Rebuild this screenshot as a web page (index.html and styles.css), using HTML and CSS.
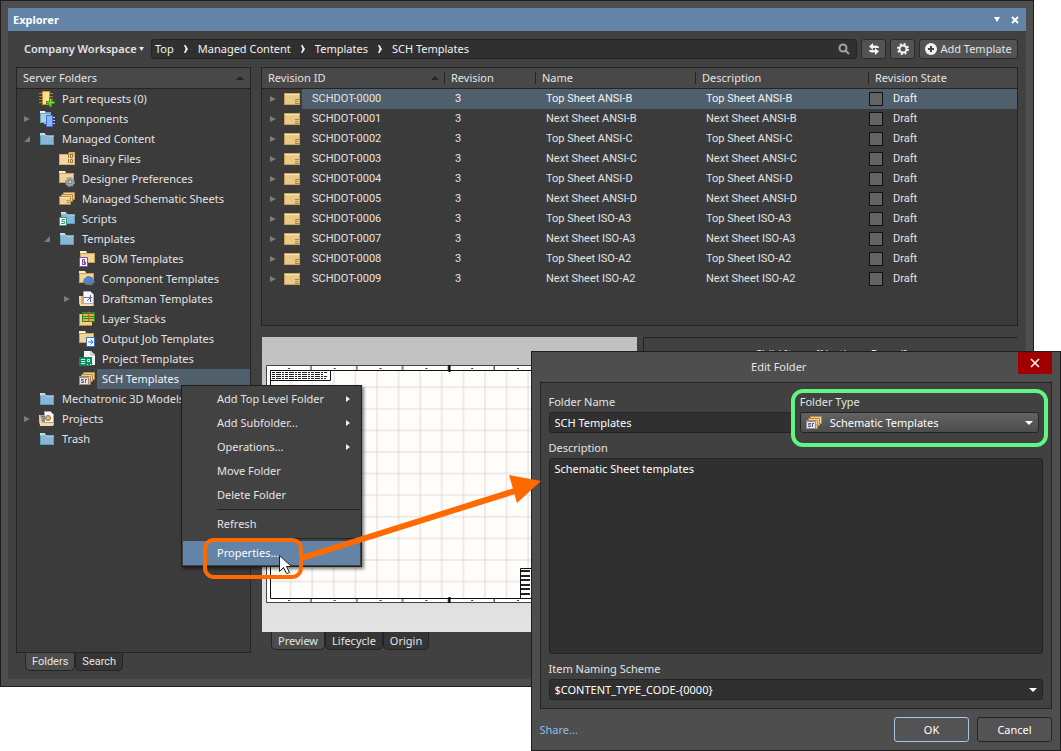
FILE: index.html
```html
<!DOCTYPE html>
<html lang="en">
  <head>
    <meta charset="UTF-8" />
    <meta name="viewport" content="width=device-width, initial-scale=1.0" />
    <title>Explorer</title>
    <link rel="stylesheet" href="styles.css">
  </head>
  <body>
    <!-- icon set -->
    <svg class="sprite" width="0" height="0" aria-hidden="true">
      <symbol id="i-folder" viewBox="0 0 16 16">
        <path d="M1 3h5l1 1.500h8V14H1z" fill="#5c9fbd"/>
        <path d="M1 2h5v2H1z" fill="#bfe3ee"/>
        <path d="M2 5h12v8H2z" fill="#8bb4d6"/>
        <path d="M1 4h6l1 1h7" fill="none" stroke="#b9dcea"/>
      </symbol>
      <symbol id="i-tan" viewBox="0 0 16 16">
        <path d="M0 2h6l1 2h8v10H0z" fill="#c9a25c"/>
        <path d="M1 5h13v8H1z" fill="#f0d49a"/>
        <path d="M0 2h6l1 2H0z" fill="#fdf0c8"/>
      </symbol>
      <symbol id="i-part" viewBox="0 0 16 16">
        <path d="M0 2.500h14M0 5.500h14M0 8.500h14M0 11.500h14" stroke="#a9843c"/>
        <path d="M3 0h8v14H3z" fill="#c98f2b"/>
        <path d="M4 1h6v12H4z" fill="#ffe092"/>
        <path d="M11.500 7v9M7 11.500h9" stroke="#1c5a10" stroke-width="3"/>
        <path d="M11.500 7.500v8M7.500 11.500h8" stroke="#6fdc32" stroke-width="2"/>
      </symbol>
      <symbol id="i-comp" viewBox="0 0 16 16">
        <path d="M1 0h5l1 1h5v11H1z" fill="#6fa9bd"/>
        <path d="M2 3h9v8H2z" fill="#a9d2dd"/>
        <path d="M1 0h5v2H1z" fill="#e0f6fa"/>
        <path d="M5 6.500h11M5 9.500h11M5 12.500h11" stroke="#b9cdf2"/>
        <path d="M7 4h7v12H7z" fill="#4674d6"/>
        <path d="M8 5h5v10H8z" fill="#8fb3f6"/>
      </symbol>
      <symbol id="i-binary" viewBox="0 0 16 16">
        <path d="M0 3h9l1-2h6v13H0z" fill="#d8ae68"/>
        <path d="M1 4h14v9H1z" fill="#f3d7a2"/>
        <path d="M9.500 3v4M9.500 8v4M11.500 3.500h2v3h-2zM11.500 8.500h2v3h-2z" fill="none" stroke="#94763d"/>
      </symbol>
      <symbol id="i-prefs" viewBox="0 0 16 16">
        <use href="#i-tan" y="-2"/>
        <circle cx="11" cy="11" r="4" fill="#aab0b5" stroke="#8d959b" stroke-width="2" stroke-dasharray="2 1"/>
        <circle cx="11" cy="11" r="2" fill="#c9ced2" stroke="#697177"/>
      </symbol>
      <symbol id="i-sheets" viewBox="0 0 16 16">
        <g fill="#f0d197" stroke="#b38b45">
          <path d="M4.500 1.500h11v7h-11z"/><path d="M2.500 3.500h11v7h-11z"/><path d="M.5 5.500h11v8H.5z"/>
        </g>
        <path d="M1 6.500h10" stroke="#fdebc0"/>
        <path d="M7.500 9.500h3M7.500 11.500h3" stroke="#b38b45"/>
      </symbol>
      <symbol id="i-script" viewBox="0 0 16 16">
        <use href="#i-folder" x="1" y="-1"/>
        <path d="M.5 6.500h7v8h-7z" fill="#fff" stroke="#2e9c78"/>
        <path d="M6 8.500H3v2h2.500v2H2" fill="none" stroke="#2e9c78"/>
      </symbol>
      <symbol id="i-bom" viewBox="0 0 16 16">
        <use href="#i-tan" x="1" y="-2"/>
        <path d="M.5 6.500h8v9h-8z" fill="#fff" stroke="#8546b5"/>
        <path d="M3.500 8.500h2v5h-2zM3.500 11h3v2.500h-3z" fill="none" stroke="#8546b5"/>
      </symbol>
      <symbol id="i-comptpl" viewBox="0 0 16 16">
        <use href="#i-tan" y="-2"/>
        <path d="M4 11l2-4 3-2 4 1 3 5-3 3H7z" fill="#6c7787"/>
        <path d="M4 9l5-4 6 4-5 3z" fill="#4a84dc"/>
      </symbol>
      <symbol id="i-drafts" viewBox="0 0 16 16">
        <path d="M0 5h13l2 10H2L0 13z" fill="#d9b06a"/>
        <path d="M4.500.5h7l3 3v9h-10z" fill="#f8f9ff" stroke="#a5abc4"/>
        <path d="M0 5h2v8h13l-2 2H1z" fill="#f7dfa9"/>
        <path d="M5 6.500h8M11.500 4v7M12 6l-4 4" fill="none" stroke="#5a67b5"/>
        <path d="M6 6.500h3" stroke="#d0506a"/>
      </symbol>
      <symbol id="i-layers" viewBox="0 0 16 16">
        <path d="M0 3h13v12H0z" fill="#f0d08e"/>
        <path d="M.5 3v11.500H13" fill="none" stroke="#b58a3f"/>
        <path d="M3 1h13v10H3z" fill="#35862b"/>
        <path d="M4 3h11v2H4zM4 8h11v2H4z" fill="#f3a742"/>
        <path d="M4 6.500h11" stroke="#9edb55"/>
        <path d="M9.500 1v10" stroke="#a8682c"/>
      </symbol>
      <symbol id="i-output" viewBox="0 0 16 16">
        <use href="#i-tan" y="-2"/>
        <path d="M7.500 6.500h8v9h-8z" fill="#fff" stroke="#2f6fd0"/>
        <path d="M9 11h5M11.500 8.500L14 11l-2.500 2.500" fill="none" stroke="#2f6fd0"/>
      </symbol>
      <symbol id="i-project" viewBox="0 0 16 16">
        <path d="M5 0h7l4 4v10H5z" fill="#f2f7f5"/>
        <path d="M12 0v4h4" fill="none" stroke="#9fb8ad"/>
        <path d="M0 6h13v9H0z" fill="#0d8c66"/>
        <path d="M2 8.500h4M2 10.500h4M2 12.500h4M8.500 8.500h2v2h-2zM8 13.500h1M11 13.500h1" fill="none" stroke="#d7f6e9"/>
      </symbol>
      <symbol id="i-sch" viewBox="0 0 16 16">
        <use href="#i-sheets"/>
        <path d="M.5 6.500h9v7h-9z" fill="#f2e6d8" stroke="#9a8b86"/>
        <path d="M5 8.500H2.500v1.500h2v1.500H2M6 8.500h2M6.500 9v3" fill="none" stroke="#4a5fc8"/>
      </symbol>
      <symbol id="i-projects" viewBox="0 0 16 16">
        <path d="M0 4h13l2 10H2L0 12z" fill="#c99f57"/>
        <path d="M5.500.5h6l3 3v8h-9z" fill="#f4f5fa" stroke="#9ba1b5"/>
        <circle cx="9" cy="7" r="2.500" fill="#e7b850" stroke="#8c7440"/>
        <path d="M2 5.500h4M3 7.500h3M2 9.500h4" stroke="#4d7fc4"/>
        <path d="M0 4h1l2 8h12l-1 3H1z" fill="#f5dba3"/>
      </symbol>
      <symbol id="i-item" viewBox="0 0 16 12">
        <path d="M0 0h16v12H0z" fill="#c9a35a"/>
        <path d="M1 1h14v10H1z" fill="#e9c888"/>
        <path d="M1 1.500h14" stroke="#fbe7b6"/>
        <path d="M11 6.500h4M11 8.500h3M11 10.500h4" stroke="#a98440"/>
      </symbol>
      <symbol id="i-chevron" viewBox="0 0 6 8"><path d="M1 0h1.500L5 4 2.500 8H1l1.500-4z" fill="#eee"/></symbol>
    </svg>

    <div class="desktop">
      <main class="explorer">
        <header class="titlebar">
          <h1>Explorer</h1>
          <button aria-label="Panel menu"><svg width="8" height="6"><path d="M1 0h6L4 5z" fill="#fff"/></svg></button>
          <button aria-label="Close panel"><svg width="8" height="8"><path d="M1 1l6 6M7 1L1 7" stroke="#fff" stroke-width="2"/></svg></button>
        </header>

        <div class="workspace">
          <div class="toolbar">
            <button class="company">Company Workspace <svg width="5" height="4"><path d="M0 0h5L2.500 4z" fill="#e8e8e8"/></svg></button>
            <nav class="crumbs">
              <a href="#">Top</a><svg width="6" height="8"><use href="#i-chevron"/></svg>
              <a href="#">Managed Content</a><svg width="6" height="8"><use href="#i-chevron"/></svg>
              <a href="#">Templates</a><svg width="6" height="8"><use href="#i-chevron"/></svg>
              <a href="#">SCH Templates</a>
              <button class="search" aria-label="Search"><svg width="12" height="12"><circle cx="5" cy="5" r="3.500" fill="none" stroke="#a5a5a5" stroke-width="2"/><path d="M7.500 7.500L11 11" stroke="#a5a5a5" stroke-width="2"/></svg></button>
            </nav>
            <button class="tool" aria-label="Refresh"><svg width="12" height="12"><path d="M1 3.500L5 0v2.500h3c2 0 3 1 3 2.500H5v2zM11 8.500L7 12V9.500H4C2 9.500 1 8.500 1 7h6V5z" fill="#f2f2f2"/></svg></button>
            <button class="tool" aria-label="Settings"><svg width="12" height="12"><circle cx="6" cy="6" r="5" fill="none" stroke="#f2f2f2" stroke-width="2" stroke-dasharray="2 1.930"/><circle cx="6" cy="6" r="3.500" fill="none" stroke="#f2f2f2" stroke-width="2"/></svg></button>
            <button class="tool add"><svg width="12" height="12"><circle cx="6" cy="6" r="6" fill="#f2f2f2"/><path d="M6 3v6M3 6h6" stroke="#444" stroke-width="2"/></svg>Add Template</button>
          </div>

          <div class="columns">
            <section class="side">
              <div class="panel tree-panel">
                <h2 class="panel-head">Server Folders <svg width="8" height="4"><path d="M0 4h8L4 0z" fill="#252525"/></svg></h2>
                <ul class="tree">
                  <li><div class="node"><i></i><svg><use href="#i-part"/></svg><span>Part requests (0)</span></div></li>
                  <li><div class="node"><i class="closed"></i><svg><use href="#i-comp"/></svg><span>Components</span></div></li>
                  <li>
                    <div class="node"><i class="open"></i><svg><use href="#i-folder"/></svg><span>Managed Content</span></div>
                    <ul>
                      <li><div class="node"><i></i><svg><use href="#i-binary"/></svg><span>Binary Files</span></div></li>
                      <li><div class="node"><i></i><svg><use href="#i-prefs"/></svg><span>Designer Preferences</span></div></li>
                      <li><div class="node"><i></i><svg><use href="#i-sheets"/></svg><span>Managed Schematic Sheets</span></div></li>
                      <li><div class="node"><i></i><svg><use href="#i-script"/></svg><span>Scripts</span></div></li>
                      <li>
                        <div class="node"><i class="open"></i><svg><use href="#i-folder"/></svg><span>Templates</span></div>
                        <ul>
                          <li><div class="node"><i></i><svg><use href="#i-bom"/></svg><span>BOM Templates</span></div></li>
                          <li><div class="node"><i></i><svg><use href="#i-comptpl"/></svg><span>Component Templates</span></div></li>
                          <li><div class="node"><i class="closed"></i><svg><use href="#i-drafts"/></svg><span>Draftsman Templates</span></div></li>
                          <li><div class="node"><i></i><svg><use href="#i-layers"/></svg><span>Layer Stacks</span></div></li>
                          <li><div class="node"><i></i><svg><use href="#i-output"/></svg><span>Output Job Templates</span></div></li>
                          <li><div class="node"><i></i><svg><use href="#i-project"/></svg><span>Project Templates</span></div></li>
                          <li><div class="node selected"><i></i><svg><use href="#i-sch"/></svg><span>SCH Templates</span></div></li>
                        </ul>
                      </li>
                    </ul>
                  </li>
                  <li><div class="node"><i></i><svg><use href="#i-folder"/></svg><span>Mechatronic 3D Models</span></div></li>
                  <li><div class="node"><i class="closed"></i><svg><use href="#i-projects"/></svg><span>Projects</span></div></li>
                  <li><div class="node"><i></i><svg><use href="#i-folder"/></svg><span>Trash</span></div></li>
                </ul>
              </div>
              <div class="tabs">
                <button class="active">Folders</button><button>Search</button>
              </div>
            </section>

            <section class="content">
              <div class="panel items">
                <table>
                  <colgroup><col class="c-id"><col class="c-rev"><col class="c-name"><col class="c-desc"><col></colgroup>
                  <thead>
                    <tr>
                      <th>Revision ID <svg width="8" height="4"><path d="M0 4h8L4 0z" fill="#252525"/></svg></th>
                      <th>Revision</th><th>Name</th><th>Description</th><th>Revision State</th>
                    </tr>
                  </thead>
                  <tbody id="rows"></tbody>
                </table>
              </div>
              <div class="details">
                <div class="preview">
                  <svg viewBox="0 0 375 295" preserveAspectRatio="xMinYMin slice" role="img" aria-label="Sheet preview">
                    <defs>
                      <pattern id="grid" x="3" y="6" width="21.600" height="21.600" patternUnits="userSpaceOnUse">
                        <path d="M4 0v22M0 1h22" stroke="#ddd9d5" fill="none"/>
                      </pattern>
                      <pattern id="ticks" x="4" y="0" width="45.800" height="300" patternUnits="userSpaceOnUse">
                        <path d="M45 0v300" stroke="#111"/><path d="M22 31.500h2M22 263.500h2" stroke="#333"/>
                      </pattern>
                    </defs>
                    <path d="M4.500 28.500h366v237h-366z" fill="#fff" stroke="#444"/>
                    <path d="M5 29h365v236H5z" fill="url(#ticks)"/>
                    <path d="M8.500 33.500h358v228h-358z" fill="#fffdfa"/>
                    <path d="M8.500 33.500h358v228h-358z" fill="url(#grid)" stroke="#111"/>
                    <path d="M187.500 28v7M187.500 260v6" stroke="#000" stroke-width="2"/>
                    <path d="M8.500 33.500h60v10h-60z" fill="#fff" stroke="#111"/>
                    <path d="M10 35.500h56M10 37.500h52M10 39.500h55M10 41.500h54" stroke="#222" stroke-dasharray="3 1 5 1 2 1"/>
                    <path d="M258.500 231.500h108v30h-108z" fill="#fff" stroke="#111"/>
                    <path d="M259 234h107M259 239h107M259 243h107M259 248h107M259 252h107M259 257h107" stroke="#222" stroke-width="2" stroke-dasharray="9 1 4 1"/>
                  </svg>
                </div>
                <div class="panel children">Child Items [Northern Found]</div>
              </div>
              <div class="tabs">
                <button class="active">Preview</button><button>Lifecycle</button><button>Origin</button>
              </div>
            </section>
          </div>
        </div>
      </main>

      <div class="menu" role="menu">
        <button role="menuitem" class="sub">Add Top Level Folder</button>
        <button role="menuitem" class="sub">Add Subfolder...</button>
        <button role="menuitem" class="sub">Operations...</button>
        <button role="menuitem">Move Folder</button>
        <button role="menuitem">Delete Folder</button>
        <hr />
        <button role="menuitem">Refresh</button>
        <hr />
        <button role="menuitem" class="hot">Properties...</button>
      </div>

      <form class="dialog" role="dialog" aria-labelledby="dlg-title">
        <header>
          <h2 id="dlg-title">Edit Folder</h2>
          <button type="button" class="close" aria-label="Close"><svg width="10" height="10"><path d="M1 1l8 8M9 1L1 9" stroke="#fff" stroke-width="1.500"/></svg></button>
        </header>
        <div class="fields">
          <div class="pair">
            <div class="field">
              <label for="name">Folder Name</label>
              <input id="name" type="text" value="SCH Templates" />
            </div>
            <div class="field type">
              <label for="type">Folder Type</label>
              <div class="select light">
                <svg class="select-icon" width="16" height="16"><use href="#i-sch"/></svg>
                <select id="type"><option>Schematic Templates</option></select>
              </div>
            </div>
          </div>
          <div class="field grow">
            <label for="desc">Description</label>
            <textarea id="desc">Schematic Sheet templates</textarea>
          </div>
          <div class="field">
            <label for="scheme">Item Naming Scheme</label>
            <div class="select">
              <select id="scheme"><option>$CONTENT_TYPE_CODE-{0000}</option></select>
            </div>
          </div>
        </div>
        <footer>
          <a href="#">Share...</a>
          <button type="button" class="ok">OK</button>
          <button type="button">Cancel</button>
        </footer>
      </form>

      <!-- callouts drawn over the windows -->
      <svg class="callouts" width="1061" height="751" aria-hidden="true">
        <rect x="205" y="540" width="96" height="37" rx="9" fill="none" stroke="#ff6a00" stroke-width="4"/>
        <path d="M302 558L518 490" stroke="#ff6a00" stroke-width="6"/>
        <path d="M509 475L541 481 517 503z" fill="#ff6a00"/>
        <rect x="793" y="391" width="253" height="54" rx="10" fill="none" stroke="#62f584" stroke-width="4"/>
        <path d="M279.500 555.500v16l4-4 3 6 3-1-3-6h5z" fill="#fff" stroke="#222"/>
      </svg>
    </div>

    <script>
let items = [
  "Top Sheet ANSI-B", "Next Sheet ANSI-B", "Top Sheet ANSI-C", "Next Sheet ANSI-C",
  "Top Sheet ANSI-D", "Next Sheet ANSI-D", "Top Sheet ISO-A3", "Next Sheet ISO-A3",
  "Top Sheet ISO-A2", "Next Sheet ISO-A2"
];

document.querySelector("#rows").innerHTML = items.map((name, i) => `
  <tr class="${i === 0 ? "selected" : ""}">
    <td><div class="rev-id"><i class="closed"></i><svg><use href="#i-item"/></svg><span>SCHDOT-000${i}</span></div></td>
    <td>3</td>
    <td>${name}</td>
    <td>${name}</td>
    <td><div class="state"><b></b>Draft</div></td>
  </tr>`).join("");
    </script>
  </body>
</html>
```
FILE: styles.css
```css
* {
  padding: 0;
  margin: 0;
  box-sizing: border-box;
}

body {
  background: #fff;
  color: #e4e4e4;
  font: 11px/20px "Noto Sans", "Open Sans", sans-serif;
}

button, input, select, textarea {
  font: inherit;
  color: inherit;
  background: none;
  border: none;
  outline: none;
}
a {
  color: inherit;
  text-decoration: none;
}
ul {
  list-style: none;
}
svg {
  display: block;
  flex: none;
}
h1, h2 {
  font-size: 11px;
  font-weight: normal;
}
.sprite {
  position: absolute;
}

.desktop {
  position: relative;
  min-height: 100vh;
  overflow: hidden;
}

/* explorer window */
.explorer {
  display: flex;
  flex-direction: column;
  height: calc(100vh - 64px);
  min-height: 600px;
  margin-right: 27px;
  padding: 7px;
  border: 1px solid #1e1e1e;
  background: #4e4e4e;
}
.titlebar {
  display: flex;
  align-items: center;
  gap: 8px;
  height: 23px;
  padding: 0 6px 0 5px;
  background: #6384a6;
  color: #fff;
}
.titlebar h1 {
  flex: 1;
  font-weight: bold;
}
.titlebar button {
  padding: 1px;
}
.workspace {
  flex: 1;
  display: flex;
  flex-direction: column;
  min-height: 0;
  padding: 8px;
  background: #414141;
}
.toolbar {
  display: flex;
  gap: 4px;
  height: 20px;
  margin-bottom: 8px;
}
.company {
  display: flex;
  align-items: center;
  gap: 2px;
  width: 131px;
  padding-left: 8px;
  font-weight: 600;
  white-space: nowrap;
}
.crumbs {
  flex: 1;
  display: flex;
  align-items: center;
  gap: 9px;
  padding: 0 6px 0 3px;
  border: 1px solid #242424;
  border-radius: 3px;
  background: #303030;
  color: #f2f2f2;
}
.search {
  margin-left: auto;
}
.tool {
  display: flex;
  align-items: center;
  justify-content: center;
  gap: 3px;
  width: 25px;
  border: 1px solid #2a2a2a;
  border-radius: 3px;
  background: #535353;
}
.tool.add {
  width: 99px;
  white-space: nowrap;
}

.columns {
  flex: 1;
  display: grid;
  grid-template-columns: 235px 1fr;
  gap: 10px;
  min-height: 0;
}
.panel {
  border: 1px solid #242424;
  background: #3b3b3b;
}
.side, .content {
  display: flex;
  flex-direction: column;
  min-height: 0;
}
.tree-panel {
  flex: 1;
  min-height: 0;
}
.panel-head {
  display: flex;
  align-items: center;
  justify-content: space-between;
  height: 21px;
  padding: 0 6px;
  border-bottom: 1px solid #242424;
  background: #484848;
}

/* tree */
.tree ul .node {
  padding-left: 26px;
}
.tree ul ul .node {
  padding-left: 46px;
}
.node {
  display: flex;
  align-items: center;
  height: 20px;
  padding-left: 6px;
}
.node i {
  flex: none;
  width: 16px;
}
.node svg {
  width: 16px;
  height: 16px;
}
.node span {
  flex: 1;
  margin-left: 2px;
  padding-left: 5px;
  white-space: nowrap;
  overflow: hidden;
}
.closed::before, .open::before {
  content: "";
  display: block;
  width: 6px;
  height: 6px;
  margin-left: 1px;
  background: #7c7c7c;
  clip-path: polygon(0 0, 100% 50%, 0 100%);
}
.open::before {
  clip-path: polygon(100% 0, 100% 100%, 0 100%);
}
.node.selected span, tr.selected td + td {
  background: #505f6c;
  color: #f4f4f4;
}

.tabs {
  display: flex;
  height: 18px;
  margin: 0 9px;
}
.tabs button {
  padding: 0 6px;
  line-height: 16px;
  border: 1px solid #242424;
  border-top: none;
  border-radius: 0 0 5px 5px;
  background: #353535;
}
.tabs .active {
  background: #4c4c4c;
}

/* revision table */
.items {
  height: 259px;
  overflow: hidden;
}
table {
  width: 100%;
  table-layout: fixed;
  border-collapse: separate;
  border-spacing: 0;
}
.c-id { width: 183px; }
.c-rev { width: 91px; }
.c-name { width: 160px; }
.c-desc { width: 173px; }
th {
  height: 21px;
  padding-left: 6px;
  line-height: 20px;
  text-align: left;
  font-weight: normal;
  border-bottom: 1px solid #242424;
  background: linear-gradient(#242424, #242424) right / 1px 12px no-repeat #484848;
}
th:last-child {
  background: #484848;
}
th svg {
  float: right;
  margin: 8px 6px 0 0;
}
td {
  height: 20px;
  padding-left: 10px;
}
tbody, .side .tabs {
  font-family: Roboto, "Liberation Sans", sans-serif;
}
td:first-child, td:last-child {
  padding-left: 0;
}
.rev-id, .state {
  display: flex;
  align-items: center;
  height: 20px;
}
.rev-id {
  padding-left: 7px;
}
.rev-id i {
  width: 15px;
}
.rev-id svg {
  width: 16px;
  height: 12px;
}
.rev-id span {
  flex: 1;
  margin-left: 2px;
  padding-left: 10px;
}
.selected .rev-id span {
  background: #505f6c;
}
.state {
  gap: 10px;
}
.state b {
  width: 14px;
  height: 14px;
  border: 1px solid #111;
  background: #636363;
}

.details {
  flex: 1;
  display: grid;
  grid-template-columns: 1fr 1fr;
  gap: 6px;
  min-height: 0;
  padding: 11px 0 0 1px;
}
.preview {
  overflow: hidden;
  background: linear-gradient(#c0c0c0, #e3e3e3);
}
.preview svg {
  width: 100%;
  height: 100%;
}
.children {
  text-align: center;
  padding-top: 6px;
  border-width: 1px 0 0 1px;
  background: #414141;
}
.content .tabs {
  margin: 0 10px 21px;
}
.content .tabs button {
  padding: 0 6px;
}

/* context menu */
.menu {
  position: absolute;
  left: 181px;
  top: 385px;
  width: 181px;
  padding: 1px;
  border: 1px solid #1e1e1e;
  background: #424242;
  box-shadow: 2px 2px 3px rgba(0, 0, 0, .5);
}
.menu button {
  display: block;
  width: 100%;
  height: 24px;
  padding-left: 34px;
  text-align: left;
}
.menu hr {
  height: 1px;
  margin: 2px 0 2px 34px;
  border: none;
  background: #242424;
}
.menu .sub {
  display: flex;
  align-items: center;
  justify-content: space-between;
  padding-right: 10px;
}
.menu .sub::after {
  content: "";
  width: 4px;
  height: 6px;
  background: #eee;
  clip-path: polygon(0 0, 100% 50%, 0 100%);
}
.menu .hot {
  background: #6384a6;
  color: #fff;
}

/* edit folder dialog */
.dialog {
  position: absolute;
  top: 351px;
  left: 50%;
  right: 0;
  bottom: 0;
  display: flex;
  flex-direction: column;
  padding: 0 8px;
  border: 1px solid #1e1e1e;
  background: #4e4e4e;
}
.dialog header {
  position: relative;
  height: 30px;
}
.dialog h2 {
  padding: 5px 34px 0 0;
  text-align: center;
}
.close {
  position: absolute;
  top: 0;
  right: 0;
  display: grid;
  place-items: center;
  width: 34px;
  height: 22px;
  background: #a00000;
}
.fields {
  flex: 1;
  display: flex;
  flex-direction: column;
  gap: 5px;
  padding: 9px 8px 8px;
  border: 1px solid #242424;
  background: #414141;
}
.pair {
  display: grid;
  grid-template-columns: 1fr 1fr;
  gap: 8px;
}
.field {
  display: flex;
  flex-direction: column;
}
.field.grow {
  flex: 1;
}
.type {
  padding-right: 4px;
}
.field input, .field textarea, .select {
  border: 1px solid #242424;
  border-radius: 3px;
  background: #303030;
  color: #fff;
}
.field input {
  height: 21px;
  padding: 0 5px;
}
.field textarea {
  flex: 1;
  padding: 0 5px;
  resize: none;
}
.select {
  position: relative;
  height: 21px;
}
.select select {
  width: 100%;
  height: 19px;
  padding: 0 5px;
  appearance: none;
}
.select::after {
  content: "";
  position: absolute;
  right: 5px;
  top: 8px;
  width: 8px;
  height: 4px;
  background: #fff;
  clip-path: polygon(0 0, 100% 0, 50% 100%);
  pointer-events: none;
}
.select.light {
  background: linear-gradient(#636363, #4c4c4c);
}
.select-icon {
  position: absolute;
  left: 5px;
  top: 2px;
}
.light select {
  padding-left: 29px;
}
.dialog footer {
  display: flex;
  align-items: center;
  gap: 8px;
  height: 41px;
}
.dialog footer a {
  flex: 1;
  color: #8ebbe6;
}
.dialog footer button {
  width: 75px;
  height: 25px;
  border: 1px solid #242424;
  border-radius: 3px;
  background: #535353;
  color: #fff;
}
.dialog footer .ok {
  border-color: #a3c6e8;
}

.callouts {
  position: absolute;
  left: 0;
  top: 0;
  pointer-events: none;
}
```
